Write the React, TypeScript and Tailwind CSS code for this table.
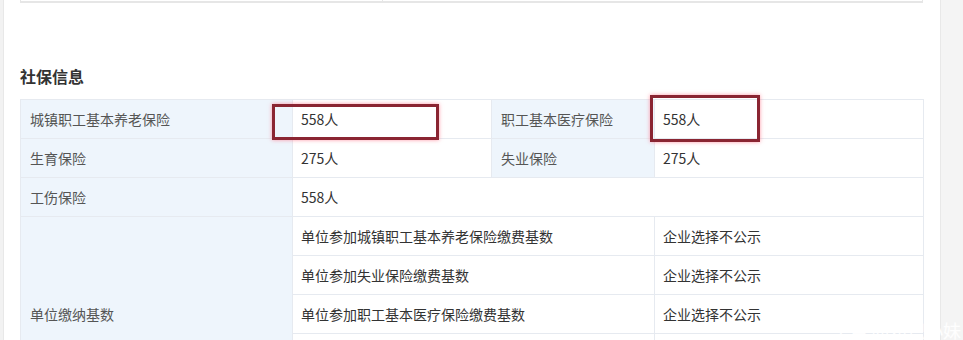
const cjk = { fontFamily: '"Noto Sans CJK SC", "Microsoft YaHei", sans-serif' };

const labelCell =
  "border border-[#e6eaf0] bg-[#eef5fc] pl-[9px] text-left align-middle font-normal text-[#555]";
const valueCell = "border border-[#e6eaf0] pl-[8px] align-middle text-[#333]";

// rows below the fold stay blank; the label spans all five
const baseRows = [
  { name: "单位参加城镇职工基本养老保险缴费基数", value: "企业选择不公示" },
  { name: "单位参加失业保险缴费基数", value: "企业选择不公示" },
  { name: "单位参加职工基本医疗保险缴费基数", value: "企业选择不公示" },
  { name: "", value: "" },
  { name: "", value: "" },
];

const MarkBox = ({ className }: { className: string }) => (
  <div
    className={`pointer-events-none absolute border-[3px] border-[#8a2532] shadow-[0_0_4px_rgba(255,110,130,0.7)] ${className}`}
  />
);

const App = () => {
  return (
    <div
      className="relative flex h-[340px] w-[963px] overflow-hidden bg-white text-[14px]"
      style={cjk}
    >
      <div className="w-[4px] shrink-0 border-r border-[#e8e8e8] bg-[#f2f2f2]" />

      <div className="relative flex-1 pl-[16px] pr-[14px]">
        {/* tail of the previous section */}
        <div className="grid h-[3px] w-[903px] grid-cols-[362px_1fr] border-x border-b-2 border-[#e6e6e6]">
          <div className="border-r border-[#e6e6e6]" />
          <div />
        </div>

        <h3 className="mt-[61px] text-[16px] leading-6 font-bold text-[#333]">
          社保信息
        </h3>

        <table className="mt-[11px] w-[903px] table-fixed border-collapse">
          <colgroup>
            <col className="w-[272px]" />
            <col className="w-[199px]" />
            <col className="w-[163px]" />
            <col className="w-[269px]" />
          </colgroup>
          <tbody>
            <tr className="h-[39px]">
              <th className={labelCell}>城镇职工基本养老保险</th>
              <td className={valueCell}>558人</td>
              <th className={labelCell}>职工基本医疗保险</th>
              <td className={valueCell}>558人</td>
            </tr>
            <tr className="h-[39px]">
              <th className={labelCell}>生育保险</th>
              <td className={valueCell}>275人</td>
              <th className={labelCell}>失业保险</th>
              <td className={valueCell}>275人</td>
            </tr>
            <tr className="h-[39px]">
              <th className={labelCell}>工伤保险</th>
              <td className={valueCell} colSpan={3}>
                558人
              </td>
            </tr>
            {baseRows.map((row, i) => (
              <tr key={i} className="h-[39px]">
                {i === 0 && (
                  <th className={labelCell} rowSpan={baseRows.length}>
                    单位缴纳基数
                  </th>
                )}
                <td className={valueCell} colSpan={2}>
                  {row.name}
                </td>
                <td className={valueCell}>{row.value}</td>
              </tr>
            ))}
          </tbody>
        </table>

        <MarkBox className="left-[268px] top-[104px] h-[36px] w-[167px]" />
        <MarkBox className="left-[646px] top-[95px] h-[47px] w-[110px]" />
      </div>

      <div className="w-[23px] shrink-0 border-l border-[#e8e8e8] bg-[#f4f4f4]" />

      <span className="pointer-events-none absolute right-[2px] bottom-[-2px] text-[18px] leading-6 text-white/90">
        头条 @知识小妹
      </span>
    </div>
  );
};

export default App;
